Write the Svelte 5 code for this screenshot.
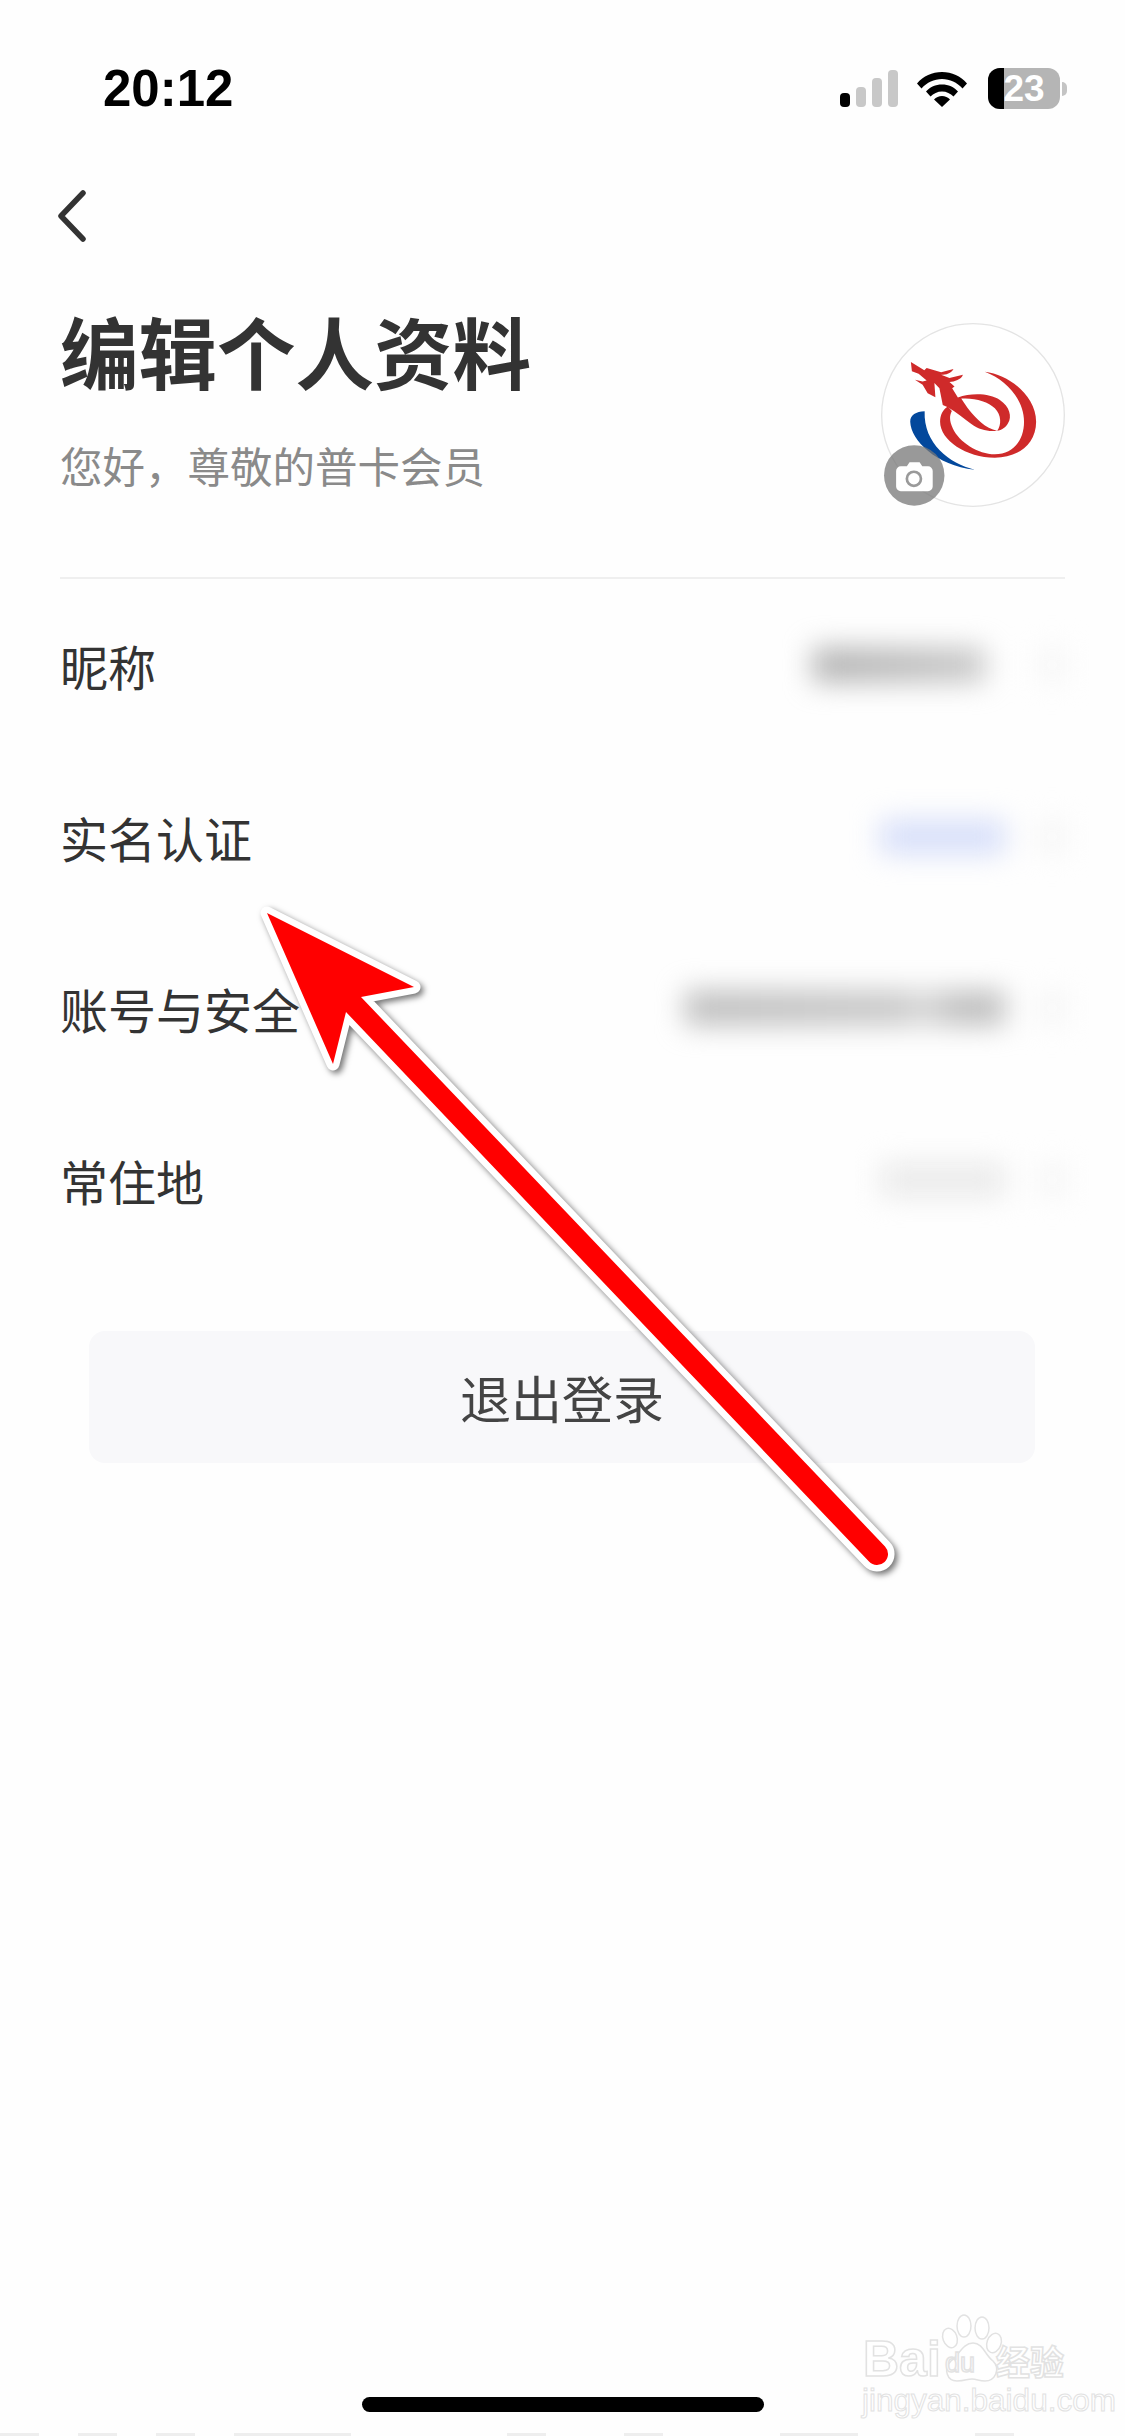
<script>
  const strip = [
    { gap: 0, w: 39 }, { gap: 39, w: 39 }, { gap: 39, w: 39 }, { gap: 39, w: 117 },
    { gap: 156, w: 39 }, { gap: 78, w: 39 }, { gap: 117, w: 78 }, { gap: 117, w: 39 }
  ];
  const rows = [
    { label: '昵称', cls: 'v1' },
    { label: '实名认证', cls: 'v2' },
    { label: '账号与安全', cls: 'v3' },
    { label: '常住地', cls: 'v4' }
  ];
</script>

<div class="page">
  <div class="status">
    <span class="time">20:12</span>
    <div class="sys">
      <div class="signal"><i class="b1"></i><i class="b2"></i><i class="b3"></i><i class="b4"></i></div>
      <svg class="wifi" viewBox="0 0 50 37" width="50" height="37">
        <path d="M0 13.500C6.500 6 15 2 25 2s18.500 4 25 11.500l-4.500 5C40 12.500 33 9 25 9S10 12.500 4.500 18.500z" />
        <path d="M9 21.500C13 17 18.500 14.500 25 14.500s12 2.500 16 7l-4.500 5C33.500 23.500 29.500 21.500 25 21.500s-8.500 2-11.500 5z" />
        <path d="M17 29.500c2-2.200 5-3.500 8-3.500s6 1.300 8 3.500L25 37z" />
      </svg>
      <div class="battery"><div class="fill"></div><span>23</span></div>
      <div class="nub"></div>
    </div>
  </div>

  <div class="nav">
    <svg width="30" height="52" viewBox="0 0 30 52"><path d="M27 3 5 26l22 23" fill="none" stroke="#333" stroke-width="5.500" stroke-linecap="round" stroke-linejoin="round"/></svg>
  </div>

  <div class="content">
    <header>
      <div class="titles">
        <h1>编辑个人资料</h1>
        <p>您好，尊敬的普卡会员</p>
      </div>
      <svg class="avatar" viewBox="126 71 548 548" width="184" height="184">
        <circle cx="400" cy="345" r="272" fill="#fff" stroke="#e4e4e4" stroke-width="4"/>
        <g transform="translate(180 150)">
          <path fill="#03489c" d="M76 184C50 185 33 195 33 215C35 270 110 345 225 358C150 340 72 280 76 184Z"/>
          <path fill="#cf2a2a" d="M255 66C330 75 408 140 408 215C408 285 350 322 285 322C200 322 122 270 122 215C122 195 130 180 145 170L157 183C149 198 150 215 160 235C178 275 235 312 285 312C340 312 372 270 372 215C372 150 320 90 255 66Z"/>
          <path fill="#cf2a2a" d="M35 37L75 62L82 55L125 68L162 58C155 72 140 75 125 75L150 85L190 75C185 90 165 95 150 97L165 110L158 115L175 143C215 128 270 130 300 150C330 170 336 200 325 218C318 232 305 240 292 242C305 225 305 195 285 175C265 155 225 143 185 146C200 170 218 195 245 218C258 230 275 238 292 242C265 245 240 240 215 222C192 205 172 188 145 172L130 165L120 115L105 100L108 142L85 130L70 105L47 90L70 95L82 92L58 72L38 65Z"/>
        </g>
        <circle cx="225" cy="525" r="90" fill="#777" opacity=".75"/>
        <path fill="#fff" d="M185 498h18l8-12h30l8 12h17a14 14 0 0 1 14 14v46a14 14 0 0 1-14 14H185a14 14 0 0 1-14-14v-46a14 14 0 0 1 14-14z"/>
        <circle cx="224" cy="535" r="21" fill="#fff" stroke="#9a9a9a" stroke-width="8"/>
      </svg>
    </header>

    {#each rows as r}
      <div class="row">
        <span class="label">{r.label}</span>
        <div class="value {r.cls}"><i class="text"></i><i class="chev"></i></div>
      </div>
    {/each}
  </div>

  <button class="logout">退出登录</button>

  <svg class="arrow" viewBox="0 0 1125 2436" width="1125" height="2436">
    <path d="M267 913L414 987L361 997L885 1546.400A11 11 0 0 1 869 1561.600L346 1012L333 1064Z" fill="#f00" stroke="#fff" stroke-width="13" stroke-linejoin="round" paint-order="stroke"/>
  </svg>

  <div class="mark">
    <svg class="pawsvg" viewBox="0 0 70 70" width="70" height="70">
      <g fill="#fff" stroke="#e2e2e2" stroke-width="1.500">
        <ellipse cx="29" cy="13" rx="7" ry="11"/>
        <ellipse cx="47" cy="15" rx="7" ry="11"/>
        <ellipse cx="15" cy="25" rx="7" ry="10" transform="rotate(-20 15 25)"/>
        <ellipse cx="59" cy="30" rx="7" ry="10" transform="rotate(20 59 30)"/>
        <path d="M38 30C48 30 50 42 58 48C66 56 60 68 50 68C44 68 42 66 37 66C32 66 30 68 22 68C12 68 8 56 16 48C24 42 28 30 38 30Z"/>
      </g>
    </svg>
    <div class="l1"><span class="bai">Bai</span><span class="du">du</span><span class="jy">经验</span></div>
    <div class="l2">jingyan.baidu.com</div>
  </div>

  <div class="home"></div>
  <div class="strip">
    {#each strip as s}
      <i style="margin-left:{s.gap}px;width:{s.w}px"></i>
    {/each}
  </div>
</div>

<style>
  :global(body) { margin: 0; background: #fefefe; }
  .page {
    position: relative;
    width: 1125px;
    height: 2436px;
    overflow: hidden;
    background: #fefefe;
    font-family: "Noto Sans CJK SC", "Liberation Sans", sans-serif;
    color: #333;
  }
  .status {
    height: 166px;
    box-sizing: border-box;
    padding: 60px 58px 0 103px;
    display: flex;
    justify-content: space-between;
    align-items: flex-start;
  }
  .time {
    font: 700 51px/58px "Liberation Sans", sans-serif;
    color: #000;
  }
  .sys { display: flex; align-items: flex-start; margin-top: 8px; }
  .signal { display: flex; align-items: flex-end; gap: 6px; height: 37px; margin-top: 2px; margin-right: 19px; }
  .signal i { display: block; width: 10px; background: #c8c8c8; border-radius: 4px; }
  .signal .b1 { height: 14px; background: #000; }
  .signal .b2 { height: 20px; }
  .signal .b3 { height: 29px; }
  .signal .b4 { height: 37px; }
  .wifi { fill: #000; margin-top: 2px; margin-right: 21px; }
  .battery {
    position: relative;
    width: 72px;
    height: 41px;
    border-radius: 12px;
    background: #b5b5b5;
    overflow: hidden;
    text-align: center;
  }
  .battery .fill { position: absolute; left: 0; top: 0; bottom: 0; width: 16px; background: #000; }
  .battery span {
    position: relative;
    font: 700 37px/41px "Liberation Sans", sans-serif;
    color: #fff;
  }
  .nub { width: 5px; height: 14px; margin: 14px 0 0 2px; background: #c4c4c4; border-radius: 0 5px 5px 0; }
  .nav { height: 100px; padding-left: 56px; display: flex; align-items: center; }
  .content { padding: 0 60px; }
  header {
    height: 313px;
    box-sizing: border-box;
    display: flex;
    justify-content: space-between;
    align-items: flex-start;
    border-bottom: 2px solid #efefef;
  }
  .titles { padding-top: 32px; }
  h1 { margin: 0; font-size: 78.500px; line-height: 104px; font-weight: 700; color: #333; }
  p { margin: 33px 0 0; font-size: 42.500px; line-height: 60px; color: #8a8a8a; }
  .avatar { margin-top: 57px; overflow: visible; }
  .row { height: 171.700px; display: flex; justify-content: space-between; align-items: center; position: relative; }
  .label { font-size: 48px; line-height: 60px; color: #333; }
  .value { display: flex; align-items: center; gap: 34px; filter: blur(14px); }
  .value i { display: block; height: 34px; }
  .chev { width: 26px; background: #f6f6f6; }
  .v1 .text { width: 172px; margin-right: 20px; background: linear-gradient(90deg, #b0b0b0, #bdbdbd 60%, #c8c8c8); }
  .v2 .text { width: 125px; background: #d6def9; }
  .v3 .text { width: 320px; background: linear-gradient(90deg, #bcbcbc, #c6c6c6 68%, #d8d8d8 74%, #bcbcbc 85%, #bcbcbc); }
  .v4 .text { width: 125px; background: #eaeaea; }
  .logout {
    display: block;
    width: 946px;
    height: 132px;
    margin: 65px 0 0 89px;
    border: 0;
    border-radius: 16px;
    background: #f8f8fa;
    color: #444;
    font: 400 51px "Noto Sans CJK SC", sans-serif;
    padding: 0;
  }
  .arrow { position: absolute; left: 0; top: 0; filter: drop-shadow(3px 3px 3px rgba(0,0,0,.55)); }
  .mark { position: absolute; left: 862px; top: 2300px; width: 210px; height: 115px; color: #fff; }
  .pawsvg { position: absolute; left: 73px; top: 13px; }
  .l1 { position: absolute; left: 0; top: 34px; height: 50px; width: 206px; }
  .l1 span { position: absolute; font-family: "Liberation Sans", sans-serif; -webkit-text-stroke: 1.500px #e2e2e2; }
  .bai { left: 1px; top: 0; font-size: 50px; line-height: 50px; font-weight: 700; }
  .du { left: 83px; top: 14px; font-size: 27px; line-height: 30px; }
  .l1 .jy { left: 134px; top: 5px; font: 700 34px/44px "Noto Sans CJK SC", sans-serif; }
  .l2 {
    position: absolute;
    left: 0;
    top: 83px;
    font: 400 31.500px/34px "Liberation Sans", sans-serif;
    white-space: nowrap;
    -webkit-text-stroke: 1px #e2e2e2;
  }
  .home {
    position: absolute;
    left: 362px;
    top: 2397px;
    width: 402px;
    height: 15px;
    border-radius: 8px;
    background: #000;
  }
  .strip { position: absolute; left: 0; right: 0; bottom: 0; height: 3px; display: flex; }
  .strip i { display: block; height: 3px; background: #eee; }
</style>
